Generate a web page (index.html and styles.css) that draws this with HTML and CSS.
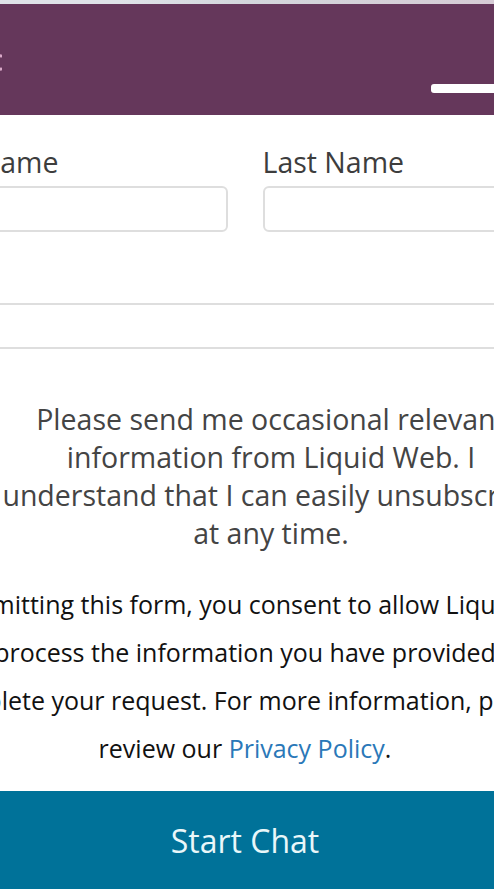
FILE: index.html
```html
<!DOCTYPE html>
<html lang="en">
<head>
  <meta charset="UTF-8">
  <title>Chat with us</title>
  <meta name="viewport" content="width=device-width, initial-scale=1">
  <link rel="stylesheet" href="styles.css">
</head>
<body>

  <div class="topline"></div>

  <div class="chat">
    <!-- HEADER -->
    <header class="chat-head">
      <svg class="head-icon" width="24" height="30" viewBox="0 0 24 30" aria-hidden="true">
        <path d="M14 10 L23 12" stroke="#d9a9c8" stroke-width="3" stroke-linecap="round"/>
        <path d="M14 27 L23 25" stroke="#d9a9c8" stroke-width="3" stroke-linecap="round"/>
      </svg>
      <span class="minimize" title="Minimize"></span>
    </header>

    <!-- FORM -->
    <form class="chat-form" onsubmit="return false">
      <div class="name-row">
        <label class="field">
          <span class="field__label">First Name</span>
          <input type="text" class="field__input">
        </label>
        <label class="field">
          <span class="field__label">Last Name</span>
          <input type="text" class="field__input">
        </label>
      </div>

      <input type="email" class="field__input field--wide" aria-label="Email">

      <label class="optin">
        <input type="checkbox" class="optin__box">
        <span class="optin__text">Please send me occasional relevant information from Liquid Web. I understand that I can easily unsubscribe at any time.</span>
      </label>

      <p class="legal">By submitting this form, you consent to allow Liquid Web to process the information you have provided to complete your request. For more information, please review our <a href="#">Privacy Policy</a>.</p>

      <button type="submit" class="start-btn">Start Chat</button>
    </form>
  </div>

</body>
</html>
```

FILE: styles.css
```css
html, body {
  margin: 0;
  padding: 0;
  height: 100%;
  overflow: hidden;
  background: #fff;
  font-family: "Open Sans", Arial, sans-serif;
}

/* === BANDE DU HAUT === */
.topline {
  height: 4px;
  background: linear-gradient(to right, #dfe2e8 0%, #dfe2e8 24%, #d3d6dc 50%, #d6cbd5 100%);
}

/* === CONTENEUR (plus large que l'écran) === */
.chat {
  width: 662px;
  margin-left: -86px;
}

/* === EN-TETE === */
.chat-head {
  height: 111px;
  background: #65375b;
  display: flex;
  align-items: flex-end;
  justify-content: space-between;
  padding: 0 65px 22px 64px;
  box-sizing: border-box;
}

.head-icon {
  align-self: flex-start;
  margin-top: 40px;
}

.minimize {
  width: 80px;
  height: 9px;
  border-radius: 3px;
  background: #fff;
}

/* === FORMULAIRE === */
.chat-form {
  padding-top: 28px;
}

.name-row {
  display: flex;
  gap: 35px;
}

.field {
  flex: 1;
  display: flex;
  flex-direction: column;
  gap: 5px;
}

.field__label {
  font-size: 28.5px;
  line-height: 38px;
  color: #3d3d3d;
}

.field__input {
  display: block;
  height: 46px;
  width: 100%;
  margin: 0;
  box-sizing: border-box;
  border: 2px solid #dedede;
  border-radius: 6px;
  background: #fff;
  outline: 0;
  font: inherit;
}

.field--wide {
  margin-top: 71px;
}

.optin {
  display: flex;
  align-items: flex-start;
  gap: 20px;
  margin-top: 51px;
  padding: 0 28px 0 36px;
}

.optin__box {
  flex: 0 0 24px;
  height: 24px;
  margin: 8px 0 0;
}

.optin__text {
  flex: 1;
  text-align: center;
  font-size: 28.5px;
  line-height: 38px;
  color: #444;
}

.legal {
  margin: 28px -4px 19px;
  text-align: center;
  font-size: 25px;
  line-height: 48px;
  color: #111;
}

.legal a {
  color: #2a78b8;
  text-decoration: none;
}

.start-btn {
  display: block;
  width: 100%;
  height: 98px;
  border: 0;
  background: #007299;
  color: #e9f7f9;
  font-family: inherit;
  font-size: 32px;
  cursor: pointer;
}
```
